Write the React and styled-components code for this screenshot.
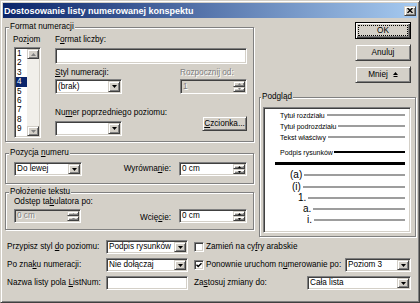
import React from 'react';
import styled, { createGlobalStyle, css } from 'styled-components';

const FACE = '#d4d0c8';
const SHADOW = '#808080';
const DARK = '#404040';
const HI = '#ffffff';

const Global = createGlobalStyle`
  html, body { margin: 0; padding: 0; background: ${FACE}; }
  body {
    font-family: "Liberation Sans", Arial, sans-serif;
    font-size: 8.2px;
    line-height: 10px;
    color: #000;
  }
  * { box-sizing: border-box; }
`;

const raised = css`
  background: ${FACE};
  border: 1px solid;
  border-color: ${FACE} ${DARK} ${DARK} ${FACE};
  box-shadow: inset 1px 1px ${HI}, inset -1px -1px ${SHADOW};
`;

const sunken = css`
  border: 1px solid;
  border-color: ${SHADOW} ${HI} ${HI} ${SHADOW};
  box-shadow: inset 1px 1px ${DARK}, inset -1px -1px ${FACE};
`;

const Window = styled.div`
  width: 420px;
  height: 303px;
  background: ${FACE};
  border: 1px solid;
  border-color: ${FACE} ${DARK} ${DARK} ${FACE};
  box-shadow: inset 1px 1px ${HI}, inset -1px -1px ${SHADOW};
  padding: 2px;
  display: flex;
  flex-direction: column;
`;

const TitleBar = styled.div`
  height: 15px;
  flex: none;
  display: flex;
  align-items: center;
  padding: 0 1px 0 1px;
  background: linear-gradient(to right, #0a246a, #a6caf0);
  color: #fff;
  font-weight: bold;
  font-size: 9px;
  white-space: nowrap;
`;

const TitleText = styled.span`
  flex: 1;
`;

const CloseBtn = styled.div`
  ${raised};
  width: 12px;
  height: 10px;
  display: flex;
  align-items: center;
  justify-content: center;
`;

const Body = styled.div`
  flex: 1;
  display: flex;
  flex-direction: column;
  padding: 4px 1px 0 2px;
`;

const TopArea = styled.div`
  display: flex;
  gap: 5px;
`;

const LeftCol = styled.div`
  width: 249px;
  display: flex;
  flex-direction: column;
`;

const RightCol = styled.div`
  width: 157px;
  display: flex;
  flex-direction: column;
`;

const Group = styled.fieldset`
  margin: ${p => p.$mt || 0}px 0 0;
  padding: ${p => p.$pad};
  border: 1px solid ${SHADOW};
  box-shadow: inset 1px 1px ${HI}, 1px 1px ${HI};
  min-width: 0;
`;

const Legend = styled.legend`
  padding: 0 1px;
  margin-left: ${p => p.$ml ?? -5}px;
  background: ${FACE};
  line-height: 10px;
  white-space: nowrap;
`;

const Label = styled.span`
  display: block;
  line-height: 10px;
  white-space: nowrap;
  margin-left: ${p => p.$ml || 0}px;
  ${p => p.$disabled && css`
    color: ${SHADOW};
    text-shadow: 1px 1px ${HI};
  `}
`;

const U = styled.span`
  text-decoration: underline;
  text-underline-offset: 1px;
`;

const Row = styled.div`
  display: flex;
  align-items: ${p => p.$align || 'center'};
  justify-content: ${p => p.$justify || 'flex-start'};
  gap: ${p => p.$gap || 0}px;
  margin-top: ${p => p.$mt || 0}px;
`;

const Col = styled.div`
  display: flex;
  flex-direction: column;
  width: ${p => (p.$w ? `${p.$w}px` : 'auto')};
  margin-left: ${p => p.$ml || 0}px;
`;

const Spacer = styled.div`
  flex: 1;
`;

const Field = styled.div`
  ${sunken};
  display: flex;
  align-items: stretch;
  flex: none;
  width: ${p => p.$w}px;
  height: ${p => p.$h || 14}px;
  margin-top: ${p => p.$mt || 0}px;
  margin-left: ${p => p.$ml || 0}px;
  padding: 1px;
  background: ${p => (p.$disabled ? FACE : '#fff')};
`;

const FieldText = styled.span`
  flex: 1;
  display: flex;
  align-items: center;
  padding-left: 1px;
  white-space: nowrap;
  overflow: hidden;
  ${p => p.$disabled && css`
    color: ${SHADOW};
    text-shadow: 1px 1px ${HI};
  `}
`;

const DropBtn = styled.div`
  ${raised};
  width: 12px;
  flex: none;
  display: flex;
  align-items: center;
  justify-content: center;
`;

const SpinBtns = styled.div`
  width: 12px;
  flex: none;
  display: flex;
  flex-direction: column;
`;

const SpinBtn = styled.div`
  ${raised};
  flex: 1;
  display: flex;
  align-items: center;
  justify-content: center;
`;

const Button = styled.button`
  ${raised};
  font: inherit;
  color: #000;
  padding: 0;
  width: ${p => p.$w}px;
  height: ${p => p.$h}px;
  margin-top: ${p => p.$mt || 0}px;
  display: flex;
  align-items: center;
  justify-content: center;
  gap: 5px;
  ${p => p.$default && css`
    border-color: #000;
    box-shadow: inset 1px 1px ${HI}, inset -1px -1px ${DARK}, inset -2px -2px ${SHADOW};
    outline: 1px dotted #000;
    outline-offset: -4px;
  `}
`;

const ButtonStack = styled.div`
  display: flex;
  flex-direction: column;
  align-items: flex-end;
  gap: 5px;
  padding-right: 5px;
`;

const ListBox = styled.div`
  ${sunken};
  background: #fff;
  width: 27px;
  height: 91px;
  margin: 2px 0 0 1px;
  padding: 1px;
  display: flex;
`;

const ListItems = styled.div`
  flex: 1;
  display: flex;
  flex-direction: column;
`;

const ListItem = styled.div`
  height: 9.4px;
  line-height: 9.4px;
  padding-left: 1px;
  ${p => p.$selected && css`
    background: #0a246a;
    color: #fff;
  `}
`;

const ScrollTrack = styled.div`
  width: 12px;
  display: flex;
  flex-direction: column;
  justify-content: space-between;
  background: #f1efea;
`;

const ScrollBtn = styled.div`
  ${raised};
  height: 10px;
  display: flex;
  align-items: center;
  justify-content: center;
`;

const FormatBody = styled.div`
  display: flex;
`;

const PoziomCol = styled.div`
  width: 28px;
  margin-left: -1px;
  display: flex;
  flex-direction: column;
`;

const MainCol = styled.div`
  width: 193px;
  margin-left: 14px;
  display: flex;
  flex-direction: column;
`;

const Preview = styled.div`
  ${sunken};
  background: #fff;
  width: 148px;
  height: 126px;
  padding: 2px 5px 0 1px;
  display: flex;
  flex-direction: column;
`;

const PRow = styled.div`
  display: flex;
  align-items: center;
  height: ${p => p.$h}px;
  margin-top: ${p => p.$mt || 0}px;
  padding-left: ${p => p.$indent}px;
`;

const PText = styled.span`
  font-size: ${p => p.$size}px;
  line-height: 1;
  white-space: nowrap;
  color: #000;
`;

const PLine = styled.div`
  flex: 1;
  min-width: 10px;
  height: ${p => p.$t || 2}px;
  background: ${p => p.$c || '#9d9d9d'};
  margin-left: ${p => p.$gap ?? 2}px;
`;

const BottomRows = styled.div`
  display: flex;
  flex-direction: column;
  gap: 4px;
  margin-top: 3px;
  padding: 0 5px 0 2px;
`;

const RowLabel = styled.span`
  width: 99px;
  flex: none;
  white-space: nowrap;
`;

const CheckLabel = styled.label`
  display: flex;
  align-items: center;
  gap: 2px;
  margin-left: ${p => p.$ml || 0}px;
  white-space: nowrap;
`;

const CheckBox = styled.span`
  ${sunken};
  width: 10px;
  height: 10px;
  background: #fff;
  display: flex;
  align-items: center;
  justify-content: center;
`;

const Arrow = ({ up, w = 5, h = 3, color = '#000' }) => (
  <svg width={w} height={h} viewBox={`0 0 ${w} ${h}`} style={{ display: 'block' }}>
    <polygon
      points={up ? `0,${h} ${w},${h} ${w / 2},0` : `0,0 ${w},0 ${w / 2},${h}`}
      fill={color}
    />
  </svg>
);

const Select = ({ w, h = 14, value, mt, ml }) => (
  <Field $w={w} $h={h} $mt={mt} $ml={ml}>
    <FieldText>{value}</FieldText>
    <DropBtn>
      <Arrow />
    </DropBtn>
  </Field>
);

const Spin = ({ w, h = 14, value, disabled, mt, ml }) => (
  <Field $w={w} $h={h} $mt={mt} $ml={ml} $disabled={disabled}>
    <FieldText $disabled={disabled}>{value}</FieldText>
    <SpinBtns>
      <SpinBtn>
        <Arrow up w={3} h={2} color={disabled ? SHADOW : '#000'} />
      </SpinBtn>
      <SpinBtn>
        <Arrow w={3} h={2} color={disabled ? SHADOW : '#000'} />
      </SpinBtn>
    </SpinBtns>
  </Field>
);

const Check = ({ checked }) => (
  <CheckBox>
    {checked && (
      <svg width="6" height="6" viewBox="0 0 6 6" style={{ display: 'block' }}>
        <path d="M0.5 2.8 L2.2 4.5 L5.5 1.2" stroke="#000" strokeWidth="1.4" fill="none" />
      </svg>
    )}
  </CheckBox>
);

const LessIcon = () => (
  <svg width="5" height="5" viewBox="0 0 5 5" style={{ display: 'block' }}>
    <polygon points="0,3 5,3 2.5,0" fill="#000" />
    <rect x="0.5" y="4" width="4" height="1" fill="#000" />
  </svg>
);

const previewRows = [
  { h: 10, indent: 15, text: 'Tytuł rozdziału', size: 7 },
  { h: 12, indent: 15, text: 'Tytuł podrozdziału', size: 7 },
  { h: 10, indent: 15, text: 'Tekst właściwy', size: 7 },
  { h: 12, indent: 15, text: 'Podpis rysunków', size: 7, mt: 4, c: '#000', gap: 1 },
  { h: 11, indent: 10, c: '#000', t: 3, gap: 0 },
  { h: 12, indent: 25, text: '(a)', size: 10 },
  { h: 12, indent: 27, text: '(i)', size: 10 },
  { h: 10, indent: 33, text: '1.', size: 10 },
  { h: 12, indent: 38, text: 'a.', size: 10 },
  { h: 10, indent: 42, text: 'i.', size: 10 },
];

export default function App() {
  return (
    <>
      <Global />
      <Window>
        <TitleBar>
          <TitleText>Dostosowanie listy numerowanej konspektu</TitleText>
          <CloseBtn>
            <svg width="6" height="5" viewBox="0 0 6 5" style={{ display: 'block' }}>
              <path d="M0.5 0 L5.5 5 M5.5 0 L0.5 5" stroke="#000" strokeWidth="1.3" />
            </svg>
          </CloseBtn>
        </TitleBar>
        <Body>
          <TopArea>
            <LeftCol>
              <Group $pad="3px 6px 3px 8px">
                <Legend>Format numeracji</Legend>
                <FormatBody>
                  <PoziomCol>
                    <Label>Poz<U>i</U>om</Label>
                    <ListBox>
                      <ListItems>
                        {[1, 2, 3, 4, 5, 6, 7, 8, 9].map(n => (
                          <ListItem key={n} $selected={n === 4}>{n}</ListItem>
                        ))}
                      </ListItems>
                      <ScrollTrack>
                        <ScrollBtn><Arrow up color={SHADOW} /></ScrollBtn>
                        <ScrollBtn><Arrow color={SHADOW} /></ScrollBtn>
                      </ScrollTrack>
                    </ListBox>
                  </PoziomCol>
                  <MainCol>
                    <Label>F<U>o</U>rmat liczby:</Label>
                    <Field $w={192} $h={16} $mt={3} />
                    <Row $gap={58} $align="flex-start" $mt={4}>
                      <Col $w={67}>
                        <Label><U>S</U>tyl numeracji:</Label>
                        <Select w={67} h={15} mt={1} value="(brak)" />
                      </Col>
                      <Col $w={67}>
                        <Label $disabled>Rozpocznij od:</Label>
                        <Spin w={67} h={15} mt={1} value="1" disabled />
                      </Col>
                    </Row>
                    <Row $align="flex-start" $justify="space-between" $mt={14}>
                      <Col>
                        <Label>Nu<U>m</U>er poprzedniego poziomu:</Label>
                        <Select w={67} h={15} mt={3} value="" />
                      </Col>
                      <Button $w={45} $h={15} $mt={8}><span><U>C</U>zcionka...</span></Button>
                    </Row>
                  </MainCol>
                </FormatBody>
              </Group>

              <Group $mt={6} $pad="4px 6px 7px 8px">
                <Legend>Pozycja <U>n</U>umeru</Legend>
                <Row>
                  <Select w={68} value="Do lewej" />
                  <Spacer />
                  <Label>Wyrówna<U>n</U>ie:</Label>
                  <Spin w={68} ml={8} value="0 cm" />
                </Row>
              </Group>

              <Group $mt={3} $pad="0 6px 6px 8px">
                <Legend>Położenie tekstu</Legend>
                <Row $align="flex-end">
                  <Col>
                    <Label>Odstęp ta<U>b</U>ulatora po:</Label>
                    <Spin w={67} mt={2} value="0 cm" disabled />
                  </Col>
                  <Spacer />
                  <Label>Wcię<U>c</U>ie:</Label>
                  <Spin w={68} ml={8} value="0 cm" />
                </Row>
              </Group>
            </LeftCol>

            <RightCol>
              <ButtonStack>
                <Button $w={56} $h={17} $default>OK</Button>
                <Button $w={56} $h={17}>Anuluj</Button>
                <Button $w={56} $h={17}>
                  <span>Mnie<U>j</U></span>
                  <LessIcon />
                </Button>
              </ButtonStack>
              <Group $mt={9} $pad="5px 4px 3px 3px">
                <Legend $ml={-2}>Podgląd</Legend>
                <Preview>
                  {previewRows.map((r, i) => (
                    <PRow key={i} $h={r.h} $mt={r.mt} $indent={r.indent}>
                      {r.text && <PText $size={r.size}>{r.text}</PText>}
                      <PLine $c={r.c} $t={r.t} $gap={r.gap} />
                    </PRow>
                  ))}
                </Preview>
              </Group>
            </RightCol>
          </TopArea>

          <BottomRows>
            <Row>
              <RowLabel>Przypisz styl <U>d</U>o poziomu:</RowLabel>
              <Select w={82} value="Podpis rysunków" />
              <CheckLabel $ml={6}>
                <Check />
                <span>Zamień na cy<U>f</U>ry arabskie</span>
              </CheckLabel>
            </Row>
            <Row>
              <RowLabel>Po zna<U>k</U>u numeracji:</RowLabel>
              <Select w={82} value="Nie dołączaj" />
              <CheckLabel $ml={6}>
                <Check checked />
                <span>Ponownie uruchom n<U>u</U>merowanie po:</span>
              </CheckLabel>
              <Spacer />
              <Select w={66} value="Poziom 3" />
            </Row>
            <Row>
              <RowLabel>Nazwa listy pola <U>L</U>istNum:</RowLabel>
              <Field $w={82} />
              <Label $ml={6}>Za<U>s</U>tosuj zmiany do:</Label>
              <Spacer />
              <Select w={104} value="Cała lista" />
            </Row>
          </BottomRows>
        </Body>
      </Window>
    </>
  );
}
